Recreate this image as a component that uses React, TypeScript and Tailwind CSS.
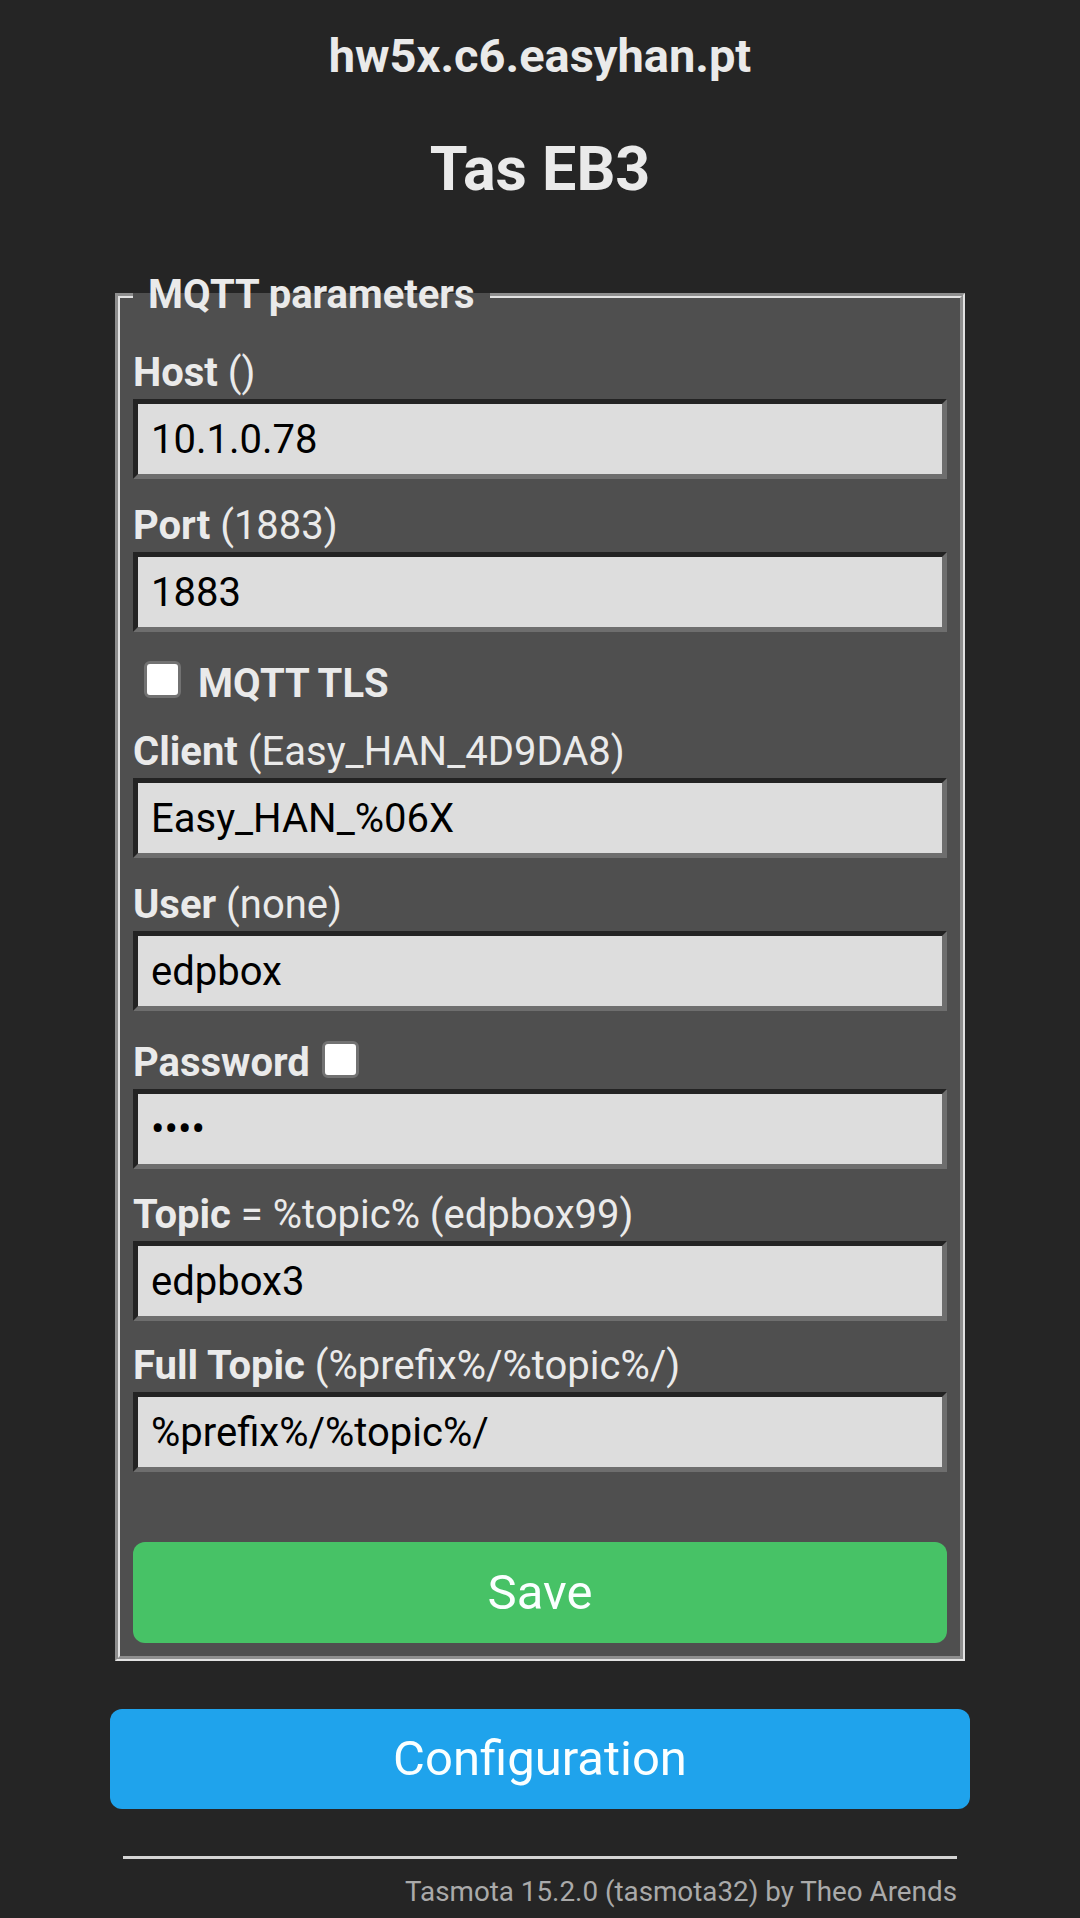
import React from "react";

type Field = {
  label: string;
  hint: string;
  value: string;
  type?: string;
  gap: string;
};

const fields: Field[] = [
  { label: "Host", hint: " ()", value: "10.1.0.78", gap: "mt-0" },
  { label: "Port", hint: " (1883)", value: "1883", gap: "mt-[21px]" },
];

const fields2: Field[] = [
  { label: "Client", hint: " (Easy_HAN_4D9DA8)", value: "Easy_HAN_%06X", gap: "mt-[16px]" },
  { label: "User", hint: " (none)", value: "edpbox", gap: "mt-[21px]" },
];

const fields3: Field[] = [
  { label: "Topic", hint: " = %topic% (edpbox99)", value: "edpbox3", gap: "mt-[20px]" },
  { label: "Full Topic", hint: " (%prefix%/%topic%/)", value: "%prefix%/%topic%/", gap: "mt-[19px]" },
];

function TextInput({ value, type = "text" }: { value: string; type?: string }) {
  return (
    <input
      type={type}
      defaultValue={value}
      className="block h-[80px] w-full border-[5px] border-t-[#232323] border-l-[#232323] border-b-[#6e6e6e] border-r-[#6e6e6e] bg-[#dddddd] px-[13px] text-[40px] text-black outline-none"
    />
  );
}

function Check() {
  return (
    <input
      type="checkbox"
      className="block h-[37px] w-[37px] shrink-0 appearance-none rounded-[6px] border-[3px] border-[#727272] bg-white"
    />
  );
}

function FieldBlock({ f }: { f: Field }) {
  return (
    <div className={f.gap}>
      <p className="leading-[52px]">
        <b>{f.label}</b>
        {f.hint}
      </p>
      <TextInput value={f.value} type={f.type} />
    </div>
  );
}

export default function App() {
  return (
    <div className="min-h-screen bg-[#252525] font-['Roboto',sans-serif] text-[#eaeaea]">
      <div className="mx-auto w-[860px] pt-[28px]">
        <h3 className="text-center text-[47px] font-bold leading-[56px]">hw5x.c6.easyhan.pt</h3>
        <h2 className="mt-[50px] text-center text-[61px] font-bold leading-[70px]">Tas EB3</h2>

        <fieldset className="mx-[5px] mt-[66px] border-[5px] border-[#e2e2e2] [border-style:groove] bg-[#4f4f4f] px-[13px] pt-[27px] pb-[13px] text-[40px]">
          <legend className="px-[15px] text-[40px] font-bold leading-[50px]">MQTT parameters</legend>

          {fields.map((f) => (
            <FieldBlock key={f.label} f={f} />
          ))}

          <label className="mt-[26px] flex h-[52px] items-start leading-[52px]">
            <span className="ml-[11px] mt-[3px]">
              <Check />
            </span>
            <b className="ml-[17px]">MQTT TLS</b>
          </label>

          {fields2.map((f) => (
            <FieldBlock key={f.label} f={f} />
          ))}

          <div className="mt-[26px]">
            <p className="flex h-[52px] items-start leading-[52px]">
              <b>Password</b>
              <span className="ml-[12px] mt-[4px]">
                <Check />
              </span>
            </p>
            <TextInput value="edpb" type="password" />
          </div>

          {fields3.map((f) => (
            <FieldBlock key={f.label} f={f} />
          ))}

          <button className="mt-[70px] block h-[101px] w-full rounded-[12px] bg-[#47c266] text-[49px] text-[#faffff]">
            Save
          </button>
        </fieldset>

        <button className="mt-[48px] block h-[100px] w-full rounded-[12px] bg-[#1fa3ec] text-[49px] text-[#faffff]">
          Configuration
        </button>

        <div className="px-[13px] pt-[47px] text-right">
          <hr className="mx-auto h-[3px] w-[834px] border-0 bg-[#d4d4d4]" />
          <p className="mt-[16px] text-[27.8px] leading-[34px] text-[#aaaaaa]">
            Tasmota 15.2.0 (tasmota32) by Theo Arends
          </p>
        </div>
      </div>
    </div>
  );
}
